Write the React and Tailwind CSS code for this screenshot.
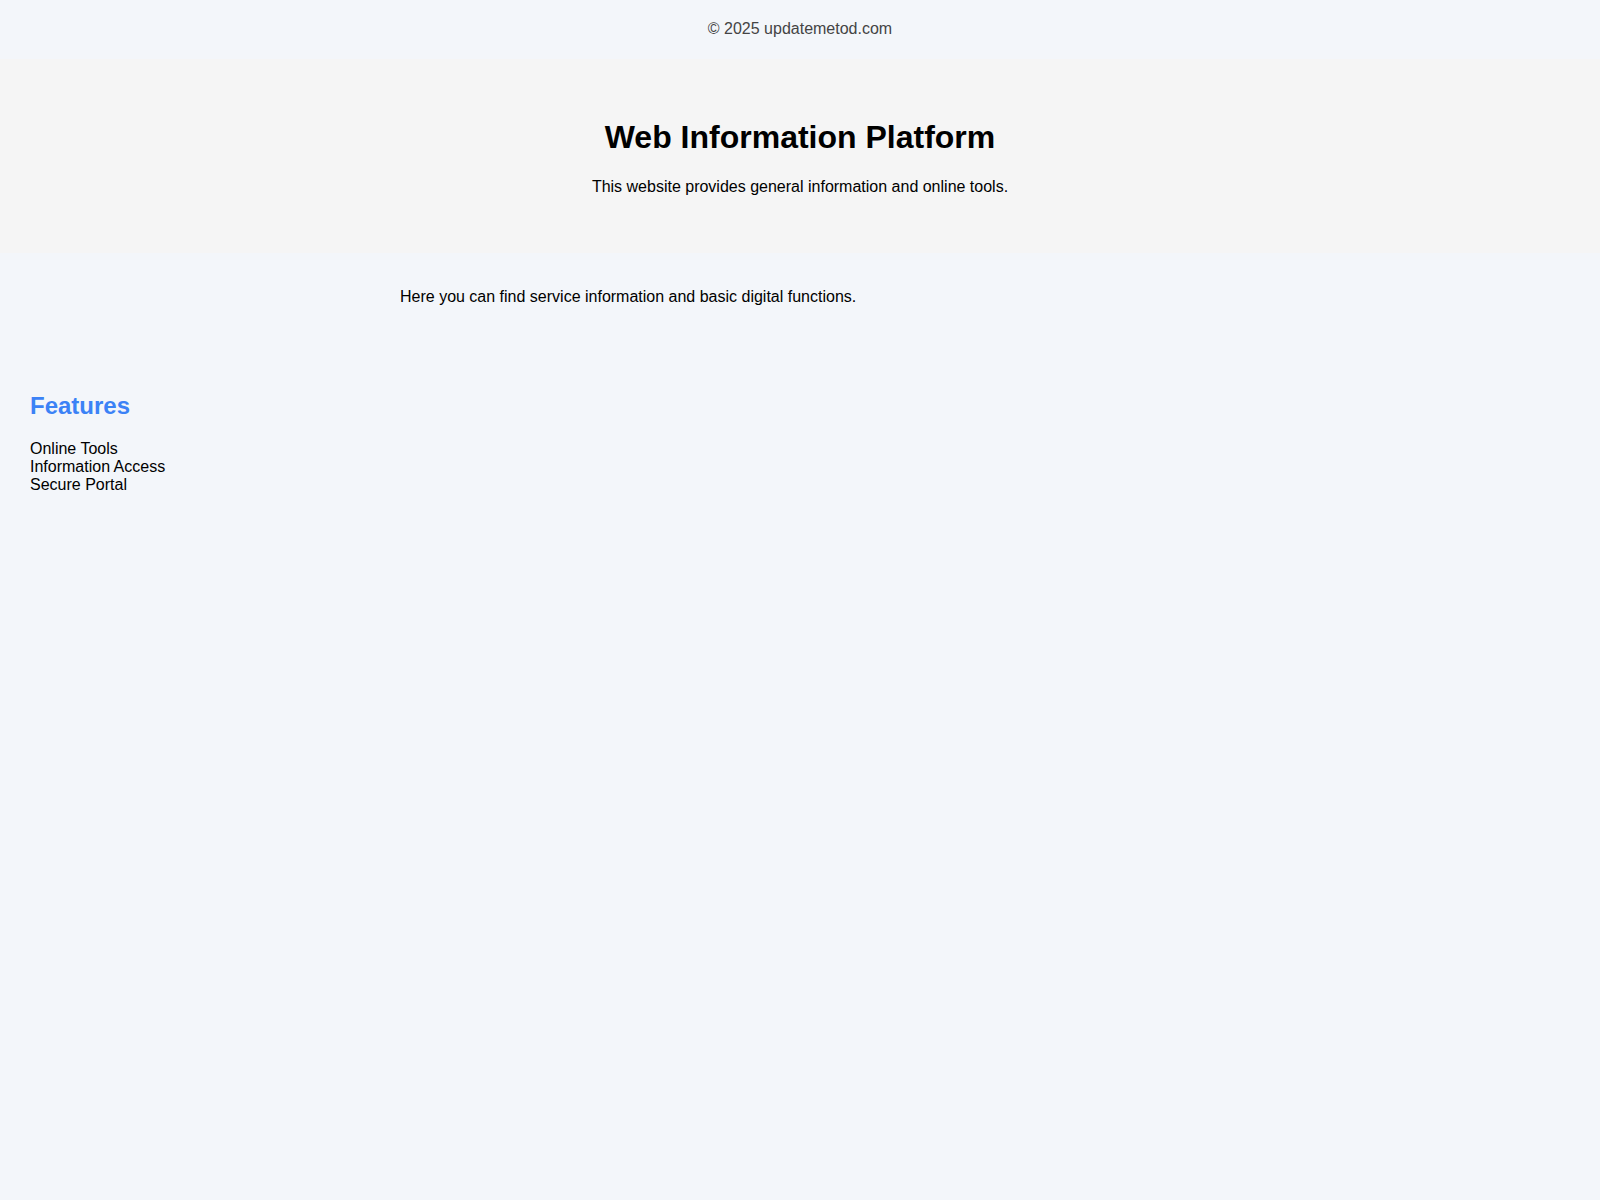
const features = ['Online Tools', 'Information Access', 'Secure Portal'];

const App = () => {
  return (
    <div className="min-h-screen bg-[#f3f6fa] text-black font-['Liberation_Sans',Arial,sans-serif] text-[16px] leading-[normal]">
      {/* Top footer line */}
      <footer className="h-[59px] pt-[20px] text-center text-[#444]">
        <p>© 2025 updatemetod.com</p>
      </footer>

      {/* Header */}
      <header className="bg-[#f5f5f5] pt-[60px] pb-[57px] text-center">
        <h1 className="text-[32px] font-bold leading-[normal]">Web Information Platform</h1>
        <p className="mt-[22px]">This website provides general information and online tools.</p>
      </header>

      {/* Intro */}
      <main className="w-[800px] mx-auto pt-[35px] pb-[34px]">
        <p>Here you can find service information and basic digital functions.</p>
      </main>

      {/* Features */}
      <section className="px-[30px] pt-[52px]">
        <h2 className="text-[24px] font-bold text-[#3b82f6] leading-[normal]">Features</h2>
        <ul className="mt-[20px] list-none p-0">
          {features.map((f) => (
            <li key={f}>{f}</li>
          ))}
        </ul>
      </section>
    </div>
  );
};

export default App;
